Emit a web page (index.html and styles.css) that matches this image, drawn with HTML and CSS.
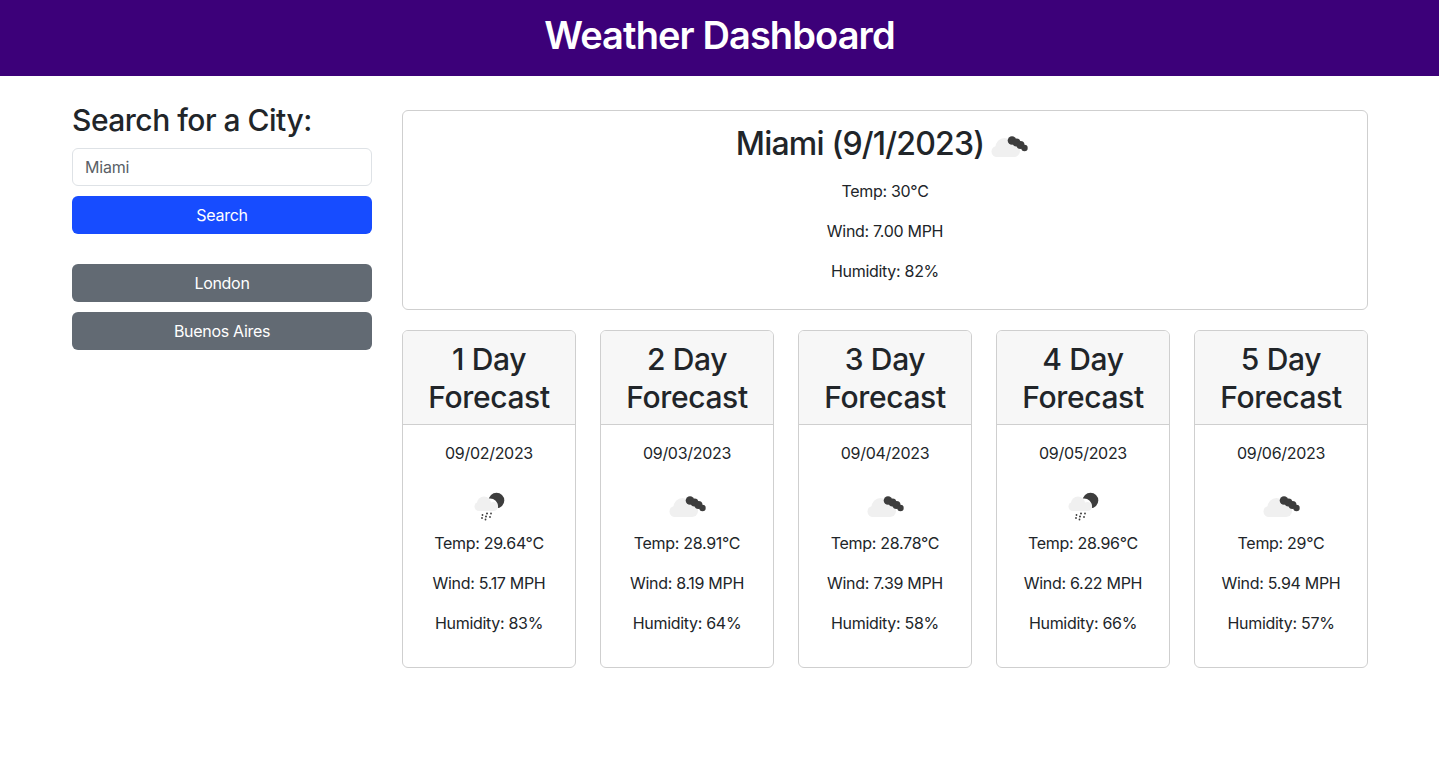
FILE: index.html
```html
<!DOCTYPE html>
<html lang="en">
<head>
<meta charset="utf-8">
<title>Weather Dashboard</title>
<link rel="stylesheet" href="styles.css">
</head>
<body>
<svg class="defs" width="0" height="0" aria-hidden="true">
  <symbol id="clouds" viewBox="0 0 50 50">
    <g fill="#f0f0f0">
      <circle cx="13" cy="30.500" r="5.500"/>
      <circle cx="20.500" cy="26" r="9"/>
      <circle cx="30" cy="30" r="6"/>
      <rect x="13" y="28" width="17" height="8"/>
    </g>
    <g fill="#3d3d3d">
      <circle cx="28" cy="19.500" r="4.300"/>
      <circle cx="32.500" cy="21.500" r="3.900"/>
      <circle cx="36.500" cy="24" r="4"/>
      <circle cx="40.500" cy="27" r="3.200"/>
    </g>
  </symbol>
  <symbol id="rain" viewBox="0 0 50 50">
    <circle fill="#3d3d3d" cx="32.500" cy="19.500" r="7.800"/>
    <circle fill="#fff" cx="26" cy="25.500" r="8"/>
    <g fill="#f0f0f0">
      <circle cx="15" cy="25.500" r="4.500"/>
      <circle cx="20" cy="22.500" r="7"/>
      <circle cx="29.500" cy="25.500" r="4.500"/>
      <rect x="15" y="24" width="14.500" height="6"/>
    </g>
    <g fill="#3d3d3d">
      <circle cx="23" cy="32.500" r="1"/>
      <circle cx="27" cy="32.500" r=".9"/>
      <circle cx="18.500" cy="34" r=".9"/>
      <circle cx="22" cy="35.500" r="1"/>
      <circle cx="26" cy="36" r=".9"/>
      <circle cx="18" cy="37" r=".9"/>
      <circle cx="21.500" cy="38.500" r=".9"/>
    </g>
  </symbol>
</svg>
<header class="site-header">
  <h1>Weather Dashboard</h1>
</header>
<main class="layout">
  <aside class="sidebar">
    <h2 class="search-title">Search for a City:</h2>
    <input class="city-input" type="text" value="Miami" aria-label="City">
    <button class="btn btn-primary" type="button">Search</button>
    <div class="history">
      <button class="btn btn-secondary" type="button">London</button>
      <button class="btn btn-secondary" type="button">Buenos Aires</button>
    </div>
  </aside>
  <section class="content">
    <article class="current">
      <div class="current-title">
        <h2>Miami (9/1/2023)</h2>
        <svg class="icon"><use href="#clouds"/></svg>
      </div>
      <p>Temp: 30°C</p>
      <p>Wind: 7.00 MPH</p>
      <p>Humidity: 82%</p>
    </article>
    <div class="forecast">
      <article class="day">
        <h3 class="day-head">1 Day Forecast</h3>
        <div class="day-body">
          <p>09/02/2023</p>
          <svg class="icon"><use href="#rain"/></svg>
          <p>Temp: 29.64°C</p>
          <p>Wind: 5.17 MPH</p>
          <p>Humidity: 83%</p>
        </div>
      </article>
      <article class="day">
        <h3 class="day-head">2 Day Forecast</h3>
        <div class="day-body">
          <p>09/03/2023</p>
          <svg class="icon"><use href="#clouds"/></svg>
          <p>Temp: 28.91°C</p>
          <p>Wind: 8.19 MPH</p>
          <p>Humidity: 64%</p>
        </div>
      </article>
      <article class="day">
        <h3 class="day-head">3 Day Forecast</h3>
        <div class="day-body">
          <p>09/04/2023</p>
          <svg class="icon"><use href="#clouds"/></svg>
          <p>Temp: 28.78°C</p>
          <p>Wind: 7.39 MPH</p>
          <p>Humidity: 58%</p>
        </div>
      </article>
      <article class="day">
        <h3 class="day-head">4 Day Forecast</h3>
        <div class="day-body">
          <p>09/05/2023</p>
          <svg class="icon"><use href="#rain"/></svg>
          <p>Temp: 28.96°C</p>
          <p>Wind: 6.22 MPH</p>
          <p>Humidity: 66%</p>
        </div>
      </article>
      <article class="day">
        <h3 class="day-head">5 Day Forecast</h3>
        <div class="day-body">
          <p>09/06/2023</p>
          <svg class="icon"><use href="#clouds"/></svg>
          <p>Temp: 29°C</p>
          <p>Wind: 5.94 MPH</p>
          <p>Humidity: 57%</p>
        </div>
      </article>
    </div>
  </section>
</main>
</body>
</html>
```
FILE: styles.css
```css
* { box-sizing: border-box; }
html, body { margin: 0; }
body {
  background: #fff;
  color: #212529;
  font-family: Inter, "Liberation Sans", sans-serif;
  font-size: 16px;
  line-height: 24px;
  letter-spacing: -0.3px;
}
.defs { position: absolute; }
h1, h2, h3, p { margin: 0; font-weight: 550; }
p { font-weight: 400; margin-bottom: 16px; }

.site-header {
  background: #3c0079;
  color: #fff;
  height: 76px;
  padding-bottom: 6px;
  display: flex;
  align-items: center;
  justify-content: center;
}
.site-header h1 { font-size: 38px; line-height: 48px; font-weight: 600; letter-spacing: -0.9px; }

.layout {
  display: flex;
  gap: 30px;
  padding: 24px 71px 0 72px;
}
.sidebar { width: 300px; flex: none; display: flex; flex-direction: column; }
.search-title { font-size: 30px; line-height: 40px; margin-bottom: 8px; letter-spacing: -0.5px; }
.city-input {
  height: 38px;
  padding: 6px 12px;
  border: 1px solid #dee2e6;
  border-radius: 6px;
  font: inherit;
  letter-spacing: -0.2px;
  color: #5a5f66;
  background: #fff;
  width: 100%;
}
.btn {
  height: 38px;
  border: 0;
  border-radius: 6px;
  font: inherit;
  letter-spacing: -0.3px;
  color: #fff;
  width: 100%;
  display: block;
}
.btn-primary { background: #174cff; margin-top: 10px; }
.btn-secondary { background: #626a73; }
.history { margin-top: 30px; display: flex; flex-direction: column; gap: 10px; }

.content { flex: 1; min-width: 0; padding-top: 10px; }
.current {
  height: 200px;
  border: 1px solid #cfcfcf;
  border-radius: 6px;
  text-align: center;
  padding-top: 10px;
}
.current-title {
  display: flex;
  justify-content: center;
  height: 50px;
  margin-bottom: 8px;
}
.current-title h2 { font-size: 32px; line-height: 46px; letter-spacing: -0.8px; }
.icon { display: block; width: 50px; height: 50px; }

.forecast {
  display: grid;
  grid-template-columns: repeat(5, 1fr);
  gap: 24px;
  margin-top: 20px;
}
.day {
  border: 1px solid #cfcfcf;
  border-radius: 6px;
  text-align: center;
  overflow: hidden;
}
.day-head {
  background: #f7f7f7;
  border-bottom: 1px solid #cfcfcf;
  padding: 9px 16px 8px;
  font-size: 30px;
  line-height: 38px;
  letter-spacing: -0.35px;
  height: 94px;
}
.day-body { padding: 16px; }
.day-body .icon { margin: 0 auto; }
```
